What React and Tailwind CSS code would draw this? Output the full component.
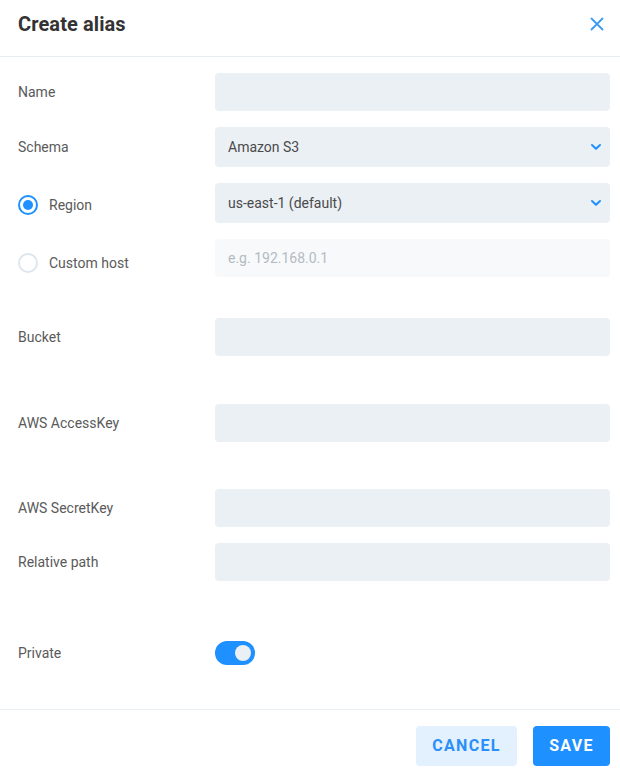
const font = { fontFamily: "Roboto, 'Liberation Sans', sans-serif" };

function Chevron() {
  return (
    <svg width="12" height="8" viewBox="0 0 12 8" className="absolute right-[8px] top-1/2 -translate-y-1/2">
      <path d="M2 2 L6 5.8 L10 2" fill="none" stroke="#1e90ff" strokeWidth="2" strokeLinecap="round" strokeLinejoin="round" />
    </svg>
  );
}

function Radio({ checked }) {
  return checked ? (
    <span className="w-[20px] h-[20px] rounded-full border-2 border-[#1e90ff] flex items-center justify-center">
      <span className="w-[10px] h-[10px] rounded-full bg-[#1e90ff]" />
    </span>
  ) : (
    <span className="w-[20px] h-[20px] rounded-full border-2 border-[#dde6ef] bg-white" />
  );
}

function Field({ children, className = "h-[38px]", bg = "bg-[#ebf0f5]" }) {
  return (
    <div className={`relative flex-1 ${className} ${bg} rounded-[4px] flex items-center px-[13px] text-[14px] text-[#4a4a4a]`}>
      {children}
    </div>
  );
}

function Row({ label, mt, children }) {
  return (
    <div className={`flex items-center ${mt}`}>
      <div className="w-[197px] text-[14px] text-[#5a5a5a]">{label}</div>
      {children}
    </div>
  );
}

export default function App() {
  return (
    <div className="w-[620px] h-[775px] bg-white flex flex-col" style={font}>
      <div className="h-[57px] border-b border-[#e8edf2] flex items-center justify-between pl-[18px] pr-[16px] pb-[9px]">
        <h1 className="text-[20px] font-bold text-[#333] tracking-[0.1px]">Create alias</h1>
        <svg width="14" height="14" viewBox="0 0 14 14">
          <path d="M1.5 1.5 L12.5 12.5 M12.5 1.5 L1.5 12.5" stroke="#3b9af7" strokeWidth="1.8" strokeLinecap="round" />
        </svg>
      </div>

      <div className="flex-1 pl-[18px] pr-[10px] flex flex-col">
        <Row label="Name" mt="mt-[16px]">
          <Field />
        </Row>
        <Row label="Schema" mt="mt-[16px]">
          <Field className="h-[40px]">
            Amazon S3
            <Chevron />
          </Field>
        </Row>
        <div className="flex items-center mt-[16px]">
          <div className="w-[197px] flex items-center gap-[11px] text-[14px] text-[#5a5a5a] pt-[4px]">
            <Radio checked />
            <span>Region</span>
          </div>
          <Field className="h-[40px]">
            us-east-1 (default)
            <Chevron />
          </Field>
        </div>
        <div className="flex items-center mt-[16px]">
          <div className="w-[197px] flex items-center gap-[11px] text-[14px] text-[#5a5a5a] pt-[10px]">
            <Radio />
            <span>Custom host</span>
          </div>
          <Field bg="bg-[#f7f9fb]">
            <span className="text-[#b4bbc2]">e.g. 192.168.0.1</span>
          </Field>
        </div>
        <Row label="Bucket" mt="mt-[41px]">
          <Field />
        </Row>
        <Row label="AWS AccessKey" mt="mt-[48px]">
          <Field />
        </Row>
        <Row label="AWS SecretKey" mt="mt-[47px]">
          <Field />
        </Row>
        <Row label="Relative path" mt="mt-[16px]">
          <Field />
        </Row>
        <div className="flex items-center mt-[60px]">
          <div className="w-[197px] text-[14px] text-[#5a5a5a]">Private</div>
          <div className="w-[40px] h-[24px] rounded-full bg-[#1e90ff] flex items-center justify-end pr-[4px]">
            <span className="w-[16px] h-[16px] rounded-full bg-[#ebf0f5]" />
          </div>
        </div>
      </div>

      <div className="h-[66px] border-t border-[#e8edf2] flex items-start justify-end gap-[16px] pt-[16px] pr-[10px]">
        <button className="w-[101px] h-[40px] rounded-[4px] bg-[#e3f0fe] text-[#2a8ff7] text-[16px] font-bold tracking-[0.08em]">
          CANCEL
        </button>
        <button className="w-[77px] h-[40px] rounded-[4px] bg-[#1e90ff] text-white text-[16px] font-bold tracking-[0.08em]">
          SAVE
        </button>
      </div>
    </div>
  );
}
